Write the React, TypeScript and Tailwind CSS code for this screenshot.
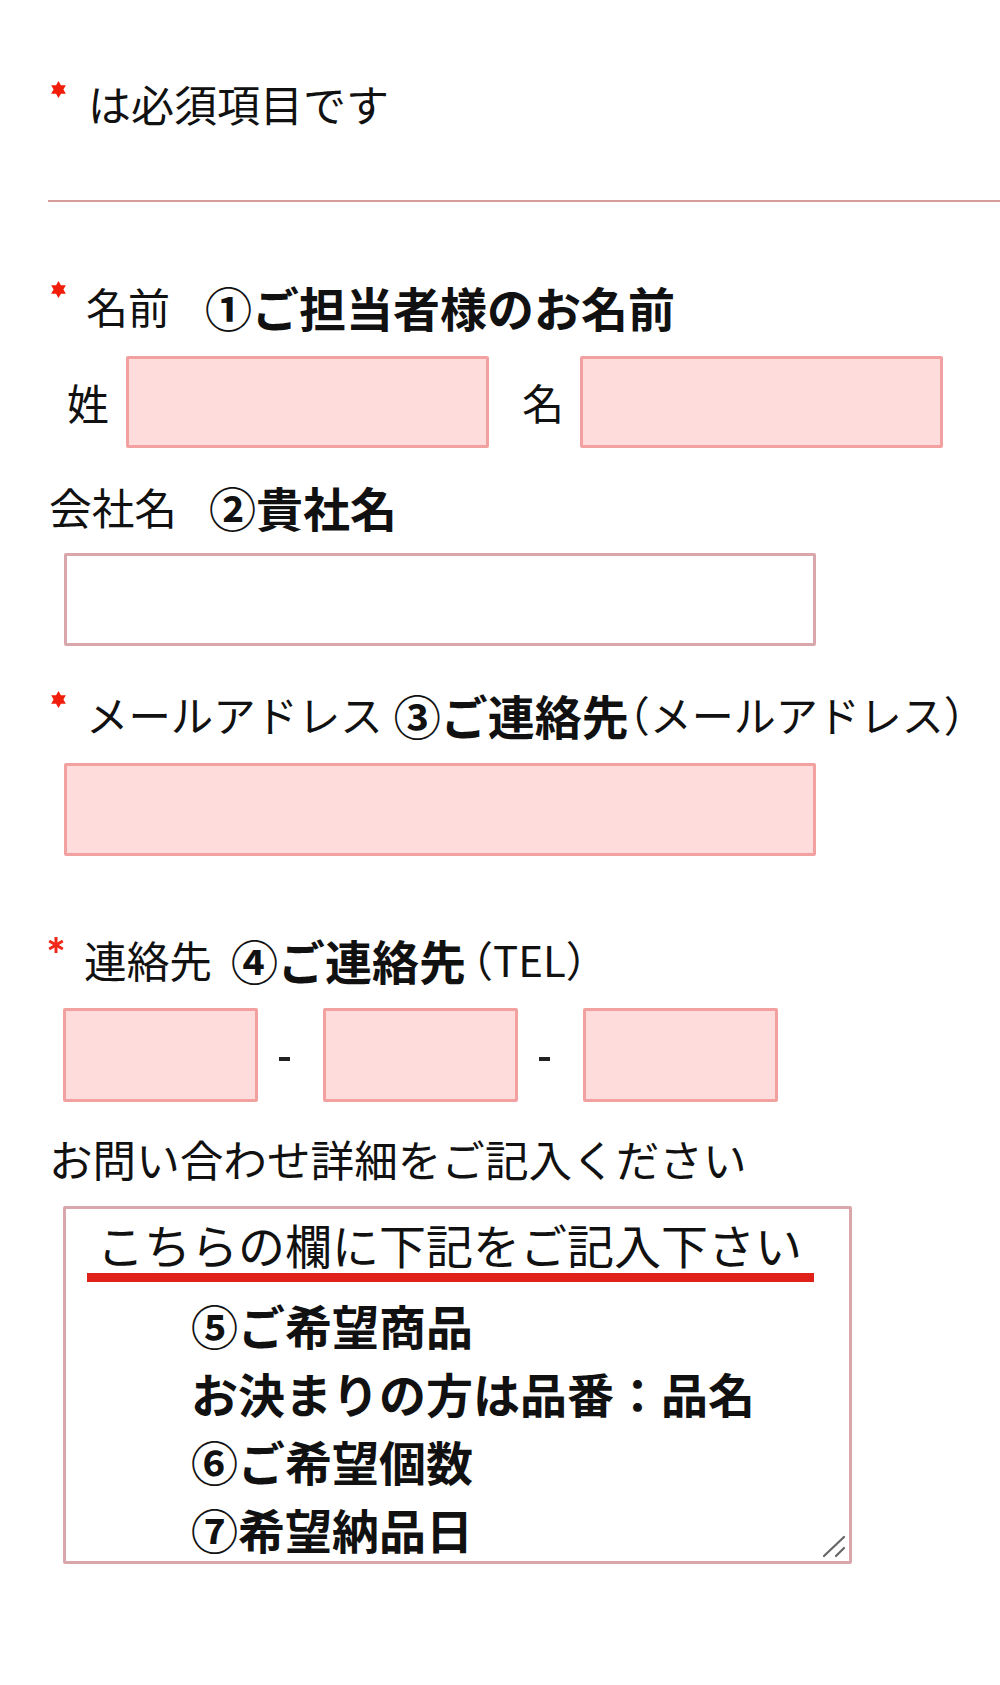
import React from 'react'

const font = "font-['Noto_Sans_CJK_JP','Noto_Sans',sans-serif]"

function Star() {
	return (
		<svg width="17" height="17" viewBox="0 0 17 17" className="shrink-0">
			<polygon
				fill="#f01e0a"
				points="8.5,0 10.95,4.26 15.86,4.25 13.4,8.5 15.86,12.75 10.95,12.74 8.5,17 6.05,12.74 1.14,12.75 3.6,8.5 1.14,4.25 6.05,4.26"
			/>
		</svg>
	)
}

function Asterisk() {
	return (
		<svg width="16" height="18" viewBox="0 0 16 18" className="shrink-0">
			<g stroke="#f0281a" strokeWidth="3" strokeLinecap="butt">
				<line x1="8" y1="1" x2="8" y2="17" />
				<line x1="1.2" y1="5" x2="14.8" y2="13" />
				<line x1="1.2" y1="13" x2="14.8" y2="5" />
			</g>
		</svg>
	)
}

const pinkBox = 'block shrink-0 bg-[#ffdcdc] border-[3px] border-[#f3a0a0] rounded-[2px] outline-none'
const plainBox = 'block shrink-0 bg-white border-[3px] border-[#d9a7ab] rounded-[2px] outline-none'

export default function App() {
	return (
		<div className={`w-full h-[1685px] bg-white text-[#111] overflow-hidden ${font}`}>
			{/* required note */}
			<div className="flex items-start pt-[81px] pl-[50px]">
				<Star />
				<span className="ml-[21px] mt-[1px] text-[43px] leading-none">は必須項目です</span>
			</div>
			<div className="mt-[75px] ml-[48px] h-[2px] bg-[#d79c9c]" />

			{/* name */}
			<div className="relative mt-[80px] h-[48px] flex items-center pl-[86px]">
				<div className="absolute left-[50px] top-[-1px]">
					<Star />
				</div>
				<span className="text-[42px] leading-none">名前</span>
				<span className="ml-[35px] text-[47px] leading-none font-bold">①ご担当者様のお名前</span>
			</div>
			<div className="mt-[26px] h-[92px] flex items-center pl-[67px]">
				<span className="text-[42px] leading-none">姓</span>
				<input className={`${pinkBox} ml-[17px] w-[363px] h-[92px]`} />
				<span className="ml-[33px] text-[42px] leading-none">名</span>
				<input className={`${pinkBox} ml-[16px] w-[363px] h-[92px]`} />
			</div>

			{/* company */}
			<div className="mt-[34px] h-[48px] flex items-center pl-[49px]">
				<span className="text-[42.7px] leading-none">会社名</span>
				<span className="ml-[32px] text-[47px] leading-none font-bold">②貴社名</span>
			</div>
			<input className={`${plainBox} mt-[23px] ml-[64px] w-[752px] h-[93px]`} />

			{/* mail */}
			<div className="relative mt-[44px] h-[48px] flex items-center pl-[86px]">
				<div className="absolute left-[50px] top-[1px]">
					<Star />
				</div>
				<span className="text-[42.4px] leading-none">メールアドレス</span>
				<span className="ml-[11px] text-[47px] leading-none font-bold">③ご連絡先</span>
				<span className="text-[42px] leading-none [font-feature-settings:'halt']">（メールアドレス）</span>
			</div>
			<input className={`${pinkBox} mt-[25px] ml-[64px] w-[752px] h-[93px]`} />

			{/* tel */}
			<div className="relative mt-[79px] h-[48px] flex items-center pl-[84px]">
				<div className="absolute left-[48px] top-[1px]">
					<Asterisk />
				</div>
				<span className="text-[42.7px] leading-none">連絡先</span>
				<span className="ml-[19px] text-[47px] leading-none font-bold">④ご連絡先</span>
				<span className="ml-[6px] text-[42px] leading-none [font-feature-settings:'halt']">（TEL）</span>
			</div>
			<div className="mt-[25px] h-[94px] flex items-center pl-[63px]">
				<input className={`${pinkBox} w-[195px] h-[94px]`} />
				<div className="ml-[21px] mt-[8px] w-[11px] h-[4px] bg-[#222]" />
				<input className={`${pinkBox} ml-[33px] w-[195px] h-[94px]`} />
				<div className="ml-[21px] mt-[8px] w-[11px] h-[4px] bg-[#222]" />
				<input className={`${pinkBox} ml-[33px] w-[195px] h-[94px]`} />
			</div>

			{/* inquiry */}
			<div className="mt-[33px] h-[48px] flex items-center pl-[49px]">
				<span className="text-[43.6px] leading-none">お問い合わせ詳細をご記入ください</span>
			</div>
			<div className={`${plainBox} relative mt-[23px] ml-[63px] w-[789px] h-[358px] overflow-hidden`}>
				<div className="pt-[11px] pl-[31px] text-[47px] leading-none">こちらの欄に下記をご記入下さい</div>
				<div className="mt-[6px] ml-[21px] w-[727px] h-[9px] bg-[#e0211a]" />
				<div className="mt-[9px] pl-[125px] text-[47px] leading-[68px] font-bold">
					<div>⑤ご希望商品</div>
					<div>お決まりの方は品番：品名</div>
					<div>⑥ご希望個数</div>
					<div>⑦希望納品日</div>
				</div>
				<svg className="absolute right-[2px] bottom-[2px]" width="26" height="26" viewBox="0 0 26 26">
					<g stroke="#666" strokeWidth="2.2" strokeLinecap="round">
						<line x1="3" y1="23" x2="23" y2="4" />
						<line x1="15" y1="23" x2="23" y2="15" />
					</g>
				</svg>
			</div>
		</div>
	)
}
